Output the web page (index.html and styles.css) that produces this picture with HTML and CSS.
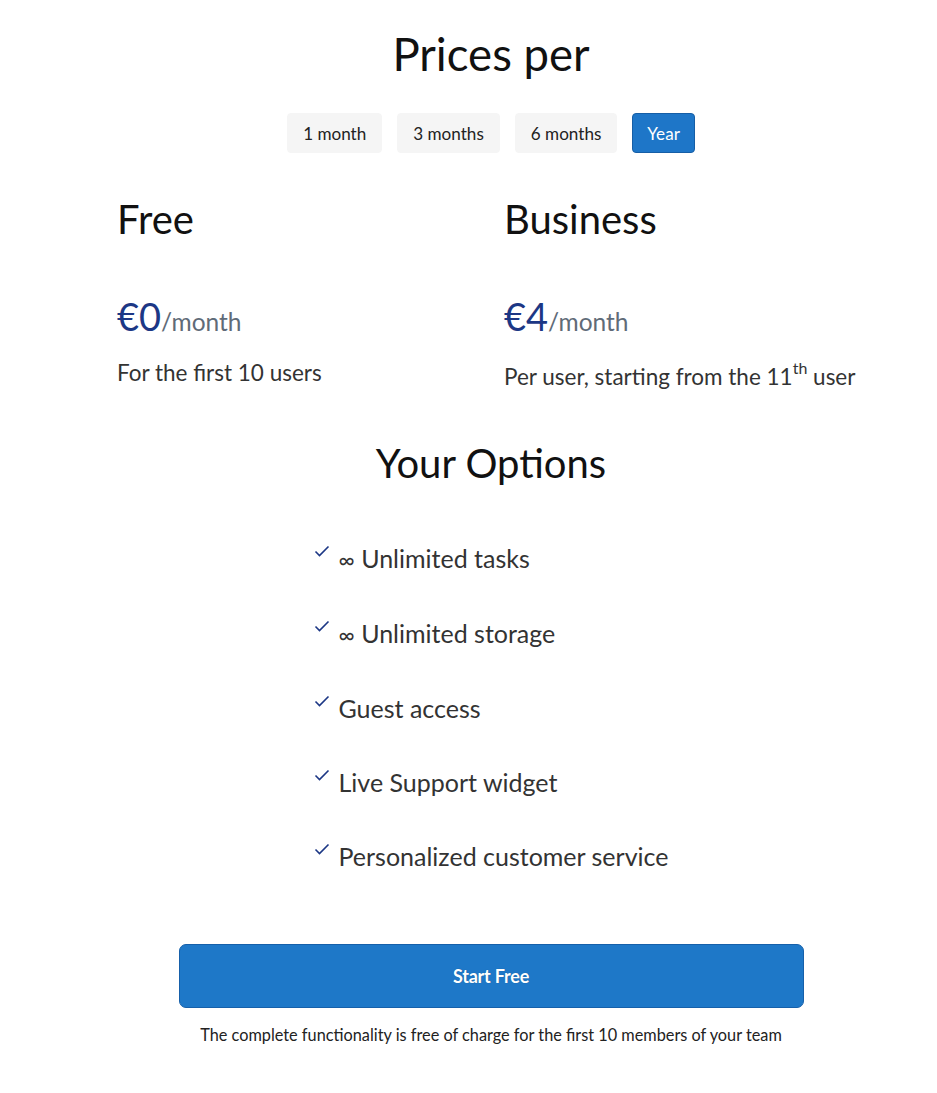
FILE: index.html
```html
<!DOCTYPE html>
<html lang="en">
<head>
<meta charset="utf-8">
<title>Prices</title>
<link rel="stylesheet" href="styles.css">
</head>
<body>
<div class="page">
  <h1 class="title">Prices per</h1>
  <div class="tabs">
    <button class="tab">1 month</button>
    <button class="tab">3 months</button>
    <button class="tab">6 months</button>
    <button class="tab active">Year</button>
  </div>
  <div class="plans">
    <div class="plan">
      <h2 class="plan-name">Free</h2>
      <div class="price"><span class="amount">€0</span><span class="period">/month</span></div>
      <p class="desc">For the first 10 users</p>
    </div>
    <div class="plan">
      <h2 class="plan-name">Business</h2>
      <div class="price"><span class="amount">€4</span><span class="period">/month</span></div>
      <p class="desc">Per user, starting from the 11<sup>th</sup> user</p>
    </div>
  </div>
  <h2 class="options-title">Your Options</h2>
  <div class="options-wrap">
    <ul class="options">
      <li class="option"><svg class="check" viewBox="0 0 16 12" width="16" height="12"><path d="M1.5 6.5 L5.5 10.5 L14.5 1.5" fill="none" stroke="#1c3785" stroke-width="1.6"/></svg><span class="option-text"><span class="inf">∞</span> Unlimited tasks</span></li>
      <li class="option"><svg class="check" viewBox="0 0 16 12" width="16" height="12"><path d="M1.5 6.5 L5.5 10.5 L14.5 1.5" fill="none" stroke="#1c3785" stroke-width="1.6"/></svg><span class="option-text"><span class="inf">∞</span> Unlimited storage</span></li>
      <li class="option"><svg class="check" viewBox="0 0 16 12" width="16" height="12"><path d="M1.5 6.5 L5.5 10.5 L14.5 1.5" fill="none" stroke="#1c3785" stroke-width="1.6"/></svg><span class="option-text">Guest access</span></li>
      <li class="option"><svg class="check" viewBox="0 0 16 12" width="16" height="12"><path d="M1.5 6.5 L5.5 10.5 L14.5 1.5" fill="none" stroke="#1c3785" stroke-width="1.6"/></svg><span class="option-text">Live Support widget</span></li>
      <li class="option"><svg class="check" viewBox="0 0 16 12" width="16" height="12"><path d="M1.5 6.5 L5.5 10.5 L14.5 1.5" fill="none" stroke="#1c3785" stroke-width="1.6"/></svg><span class="option-text">Personalized customer service</span></li>
    </ul>
  </div>
  <div class="cta">
    <button class="start">Start Free</button>
    <p class="note">The complete functionality is free of charge for the first 10 members of your team</p>
  </div>
</div>
</body>
</html>
```

FILE: styles.css
```css
* { box-sizing: border-box; }
html, body { margin: 0; padding: 0; background: #fff; }
body {
  font-family: Lato, "Open Sans", "Liberation Sans", sans-serif;
  color: #333;
}
.page {
  padding-left: 45px;
  padding-top: 26px;
  display: flex;
  flex-direction: column;
  align-items: center;
}
.title {
  margin: 0;
  font-size: 45.5px;
  font-weight: 400;
  line-height: 56px;
  color: #111;
}
.tabs {
  display: flex;
  gap: 15px;
  margin-top: 31px;
}
.tab {
  font-family: inherit;
  font-size: 17.1px;
  height: 40px;
  padding: 0 15px;
  border: 1px solid #f5f5f5;
  background: #f5f5f5;
  border-radius: 4px;
  color: #222;
}
.tab.active {
  background: #1e76c8;
  border-color: #165ea6;
  color: #fff;
  padding: 0 14px;
}
.plans {
  display: flex;
  width: 774px;
  margin-top: 42px;
}
.plan {
  width: 387px;
  padding-left: 13px;
}
.plan-name {
  margin: 0;
  font-size: 40px;
  font-weight: 400;
  line-height: 48px;
  color: #111;
}
.price {
  margin-top: 49px;
  line-height: 48px;
}
.amount {
  font-size: 38px;
  color: #1c3785;
}
.period {
  font-size: 24.5px;
  color: #5f6b78;
}
.desc {
  margin: 9px 0 0;
  font-size: 22.5px;
  line-height: 30px;
  color: #333;
}
.desc sup {
  font-size: 16px;
  line-height: 20px;
  vertical-align: 10.5px;
}
.options-title {
  margin: 47px 0 0;
  font-size: 40px;
  font-weight: 400;
  line-height: 48px;
  color: #111;
}
.options-wrap {
  display: flex;
  justify-content: center;
  margin-top: 54px;
}
.options {
  list-style: none;
  margin: 0;
  padding: 0;
  display: flex;
  flex-direction: column;
  gap: 39px;
}
.option {
  display: flex;
  align-items: flex-start;
  font-size: 25px;
  line-height: 35px;
  color: #333;
}
.check {
  margin-top: 4px;
  margin-right: 9px;
  flex: none;
}
.inf {
  font-size: 22px;
}
.cta {
  margin-top: 70px;
  display: flex;
  flex-direction: column;
  align-items: center;
}
.start {
  width: 625px;
  height: 64px;
  background: #1e78c8;
  border: 1px solid #1660aa;
  border-radius: 7px;
  color: #fff;
  font-family: inherit;
  font-size: 18px;
  font-weight: 700;
  letter-spacing: -0.2px;
  text-shadow: 0 0 1px rgba(0,0,0,0.3);
}
.note {
  margin: 17px 0 0;
  font-size: 16.3px;
  line-height: 20px;
  color: #222;
}
```
